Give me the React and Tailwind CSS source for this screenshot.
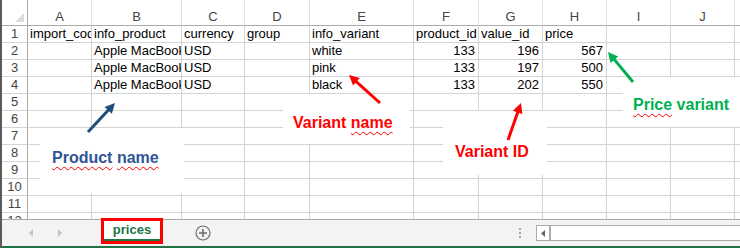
import React from 'react';

const letters = ['A', 'B', 'C', 'D', 'E', 'F', 'G', 'H', 'I', 'J', ''];

const rows = [
  ['import_code', 'info_product', 'currency', 'group', 'info_variant', 'product_id', 'value_id', 'price'],
  ['', 'Apple MacBook', 'USD', '', 'white', 133, 196, 567],
  ['', 'Apple MacBook', 'USD', '', 'pink', 133, 197, 500],
  ['', 'Apple MacBook', 'USD', '', 'black', 133, 202, 550],
  [], [], [], [], [], [], [], [],
];

const Arrow = ({ from, to, color, width = 3, head = 10, spread = 5 }) => {
  const [x1, y1] = from;
  const [x2, y2] = to;
  const len = Math.hypot(x2 - x1, y2 - y1);
  const ux = (x2 - x1) / len;
  const uy = (y2 - y1) / len;
  const bx = x2 - ux * head;
  const by = y2 - uy * head;
  const pts = `${x2},${y2} ${bx - uy * spread},${by + ux * spread} ${bx + uy * spread},${by - ux * spread}`;
  return (
    <g>
      <line x1={x1} y1={y1} x2={bx + ux} y2={by + uy} stroke={color} strokeWidth={width} />
      <polygon points={pts} fill={color} />
    </g>
  );
};

const Cell = ({ value }) => {
  const num = typeof value === 'number';
  return (
    <div
      className={`h-[17px] border-r border-b border-[#d4d4d4] overflow-hidden whitespace-nowrap flex items-center text-[13px] leading-[16px] text-black ${
        num ? 'justify-end pr-[3px]' : 'pl-[2px]'
      }`}
    >
      {value}
    </div>
  );
};

const Note = ({ className, children }) => (
  <div className={`absolute bg-white font-bold text-[16px] leading-[20px] whitespace-nowrap ${className}`}>{children}</div>
);

const squiggle = 'underline decoration-wavy decoration-[#ff0000] decoration-1 underline-offset-[3px]';

export default function App() {
  return (
    <div className="relative w-[740px] h-[248px] overflow-hidden bg-white flex" style={{ fontFamily: '"Liberation Sans", Arial, sans-serif' }}>
      <div className="w-[2px] h-full bg-[#5a5a5a] shrink-0" />
      <div className="flex-1 flex flex-col min-w-0">
        {/* sheet grid */}
        <div className="h-[219px] overflow-hidden">
          <div className="grid grid-cols-[26px_64px_90px_63px_65px_104px_65px_64px_64px_64px_64px_64px] w-[797px]">
            <div className="h-[26px] border-r border-b border-[#ababab] flex items-end justify-end pr-[3px] pb-[3px]">
              <svg width="9" height="9" viewBox="0 0 9 9">
                <polygon points="9,0 9,9 0,9" fill="#dcdcdc" />
              </svg>
            </div>
            {letters.map((l, j) => (
              <div
                key={j}
                className="h-[26px] border-r border-r-[#e1e1e1] border-b border-b-[#ababab] flex items-end justify-center text-[13px] leading-[16px] text-[#444]"
              >
                {l}
              </div>
            ))}
            {rows.map((r, i) => (
              <React.Fragment key={i}>
                <div className="h-[17px] border-r border-r-[#ababab] border-b border-b-[#d4d4d4] flex items-center justify-center text-[13px] leading-[16px] text-[#444]">
                  {i + 1}
                </div>
                {letters.map((l, j) => (
                  <Cell key={j} value={r[j] ?? ''} />
                ))}
              </React.Fragment>
            ))}
          </div>
        </div>

        {/* sheet tabs bar */}
        <div className="h-[29px] border-t border-[#ababab] border-b-2 border-b-[#217346] bg-[#f3f3f3] flex items-center">
          <div className="w-[27px] shrink-0" />
          <svg width="5" height="8" viewBox="0 0 5 8" className="shrink-0">
            <polygon points="4,0 4,8 0,4" fill="#c4c4c4" />
          </svg>
          <svg width="5" height="8" viewBox="0 0 5 8" className="ml-[24px] shrink-0">
            <polygon points="0,0 0,8 4,4" fill="#c4c4c4" />
          </svg>
          <div className="ml-[38px] self-start -mt-[2px] w-[62px] h-[26px] shrink-0 border-[3px] border-[#ff0000] bg-white flex">
            <div className="flex-1 border-b-2 border-[#217346] flex items-center justify-center text-[13px] font-bold text-[#217346] leading-[16px]">
              prices
            </div>
          </div>
          <svg width="16" height="16" viewBox="0 0 16 16" className="ml-[32px] shrink-0">
            <circle cx="8" cy="8" r="7" fill="none" stroke="#6d6d6d" strokeWidth="1.2" />
            <path d="M8 4v8M4 8h8" stroke="#6d6d6d" strokeWidth="1.6" />
          </svg>
          <div className="ml-[308px] w-[2px] flex flex-col gap-[2px] shrink-0">
            <div className="h-[2px] bg-[#a6a6a6]" />
            <div className="h-[2px] bg-[#a6a6a6]" />
            <div className="h-[2px] bg-[#a6a6a6]" />
          </div>
          <div className="ml-[15px] w-[220px] h-[16px] shrink-0 border border-[#ababab] bg-white flex">
            <div className="w-[14px] h-full border-r-2 border-[#ababab] flex items-center justify-center">
              <svg width="4" height="7" viewBox="0 0 4 7">
                <polygon points="4,0 4,7 0,3.5" fill="#666" />
              </svg>
            </div>
          </div>
        </div>
      </div>

      {/* annotations */}
      <Note className="left-[40px] top-[128px] w-[144px] h-[65px] pl-[12px] pt-[20px] text-[#2f5597]">
        <span className={squiggle}>Product</span> <span className={squiggle}>name</span>
      </Note>
      <Note className="left-[283px] top-[94px] w-[127px] h-[50px] pl-[10px] pt-[19px] text-[#ff0000]">
        Variant <span className={squiggle}>name</span>
      </Note>
      <Note className="left-[443px] top-[111px] w-[104px] h-[64px] pl-[12px] pt-[31px] text-[#ff0000]">
        Variant ID
      </Note>
      <Note className="left-[623px] top-[77px] w-[117px] h-[50px] pl-[10px] pt-[18px] text-[#00b050]">
        <span className={squiggle}>Price</span> variant
      </Note>

      <svg className="absolute left-0 top-0 pointer-events-none" width="740" height="248">
        <Arrow from={[88, 132]} to={[115, 103]} color="#1f4e79" />
        <Arrow from={[380, 103]} to={[349, 75]} color="#ff0000" />
        <Arrow from={[508, 140]} to={[521, 103]} color="#ff0000" />
        <Arrow from={[633, 82]} to={[608, 52]} color="#00b050" />
      </svg>
    </div>
  );
}
